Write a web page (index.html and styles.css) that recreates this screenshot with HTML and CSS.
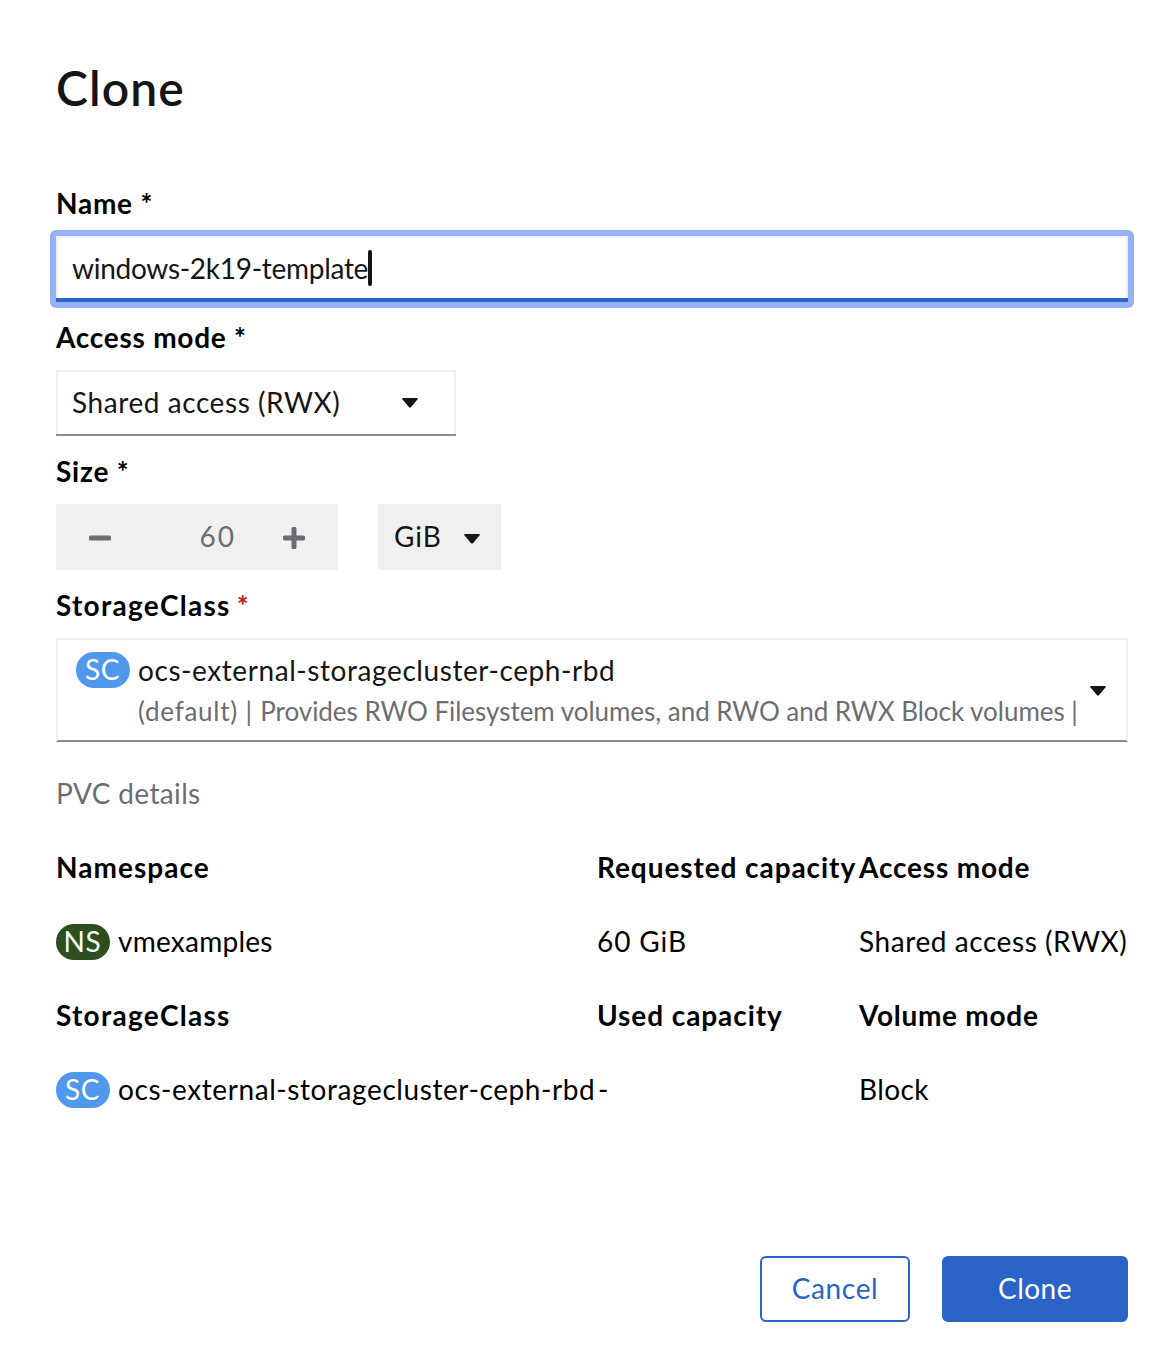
FILE: index.html
```html
<!DOCTYPE html>
<html lang="en">
<head>
<meta charset="utf-8">
<title>Clone</title>
<link rel="stylesheet" href="styles.css">
</head>
<body>
<main class="modal">
  <h1 class="title">Clone</h1>

  <form class="form">
    <div class="field">
      <label class="label label-name">Name *</label>
      <div class="focus-ring">
        <div class="control input"><span class="input-text">windows-2k19-template</span><span class="caret-bar"></span></div>
      </div>
    </div>

    <div class="field">
      <label class="label label-access">Access mode *</label>
      <div class="control select-mode">
        <span class="mode-text">Shared access (RWX)</span>
        <svg class="caret caret-mode" viewBox="0 0 16 10"><path d="M.8 0h14.400q1.300 0 .4 1.300L9.200 9Q8 10.200 6.800 9L.4 1.300Q-.5 0 .8 0Z"/></svg>
      </div>
    </div>

    <div class="field">
      <label class="label label-size">Size *</label>
      <div class="size-row">
        <div class="control stepper">
          <svg class="sign" viewBox="0 0 22 22"><rect x="0" y="8.500" width="22" height="5" rx="1.500"/></svg>
          <span class="amount">60</span>
          <svg class="sign" viewBox="0 0 22 22"><rect x="0" y="8.500" width="22" height="5" rx="1.500"/><rect x="8.500" y="0" width="5" height="22" rx="1.500"/></svg>
        </div>
        <div class="control unit">
          <span class="unit-text">GiB</span>
          <svg class="caret caret-unit" viewBox="0 0 16 10"><path d="M.8 0h14.400q1.300 0 .4 1.300L9.200 9Q8 10.200 6.800 9L.4 1.300Q-.5 0 .8 0Z"/></svg>
        </div>
      </div>
    </div>

    <div class="field">
      <label class="label label-class"><span>StorageClass</span><span class="required">*</span></label>
      <div class="storage">
        <span class="badge badge-sc">SC</span>
        <div class="storage-text">
          <div class="sc-name">ocs-external-storagecluster-ceph-rbd</div>
          <div class="storage-note"><span class="default-tag">(default) | </span>Provides RWO Filesystem volumes, and RWO and RWX Block volumes |</div>
        </div>
        <svg class="caret caret-storage" viewBox="0 0 16 10"><path d="M.8 0h14.400q1.300 0 .4 1.300L9.200 9Q8 10.200 6.800 9L.4 1.300Q-.5 0 .8 0Z"/></svg>
      </div>
    </div>
  </form>

  <section>
    <h2 class="section-title">PVC details</h2>
    <div class="details">
      <div class="term">Namespace</div>
      <div class="term term-requested">Requested capacity</div>
      <div class="term term-mode">Access mode</div>

      <div class="resource"><span class="badge badge-ns">NS</span><span class="ns-name">vmexamples</span></div>
      <div class="capacity">60 GiB</div>
      <div class="mode-text">Shared access (RWX)</div>

      <div class="term term-class">StorageClass</div>
      <div class="term term-used">Used capacity</div>
      <div class="term term-volume">Volume mode</div>

      <div class="resource"><span class="badge badge-sc">SC</span><span class="sc-name">ocs-external-storagecluster-ceph-rbd</span></div>
      <div class="dash">-</div>
      <div class="volume">Block</div>
    </div>
  </section>

  <footer class="actions">
    <button class="button cancel" type="button">Cancel</button>
    <button class="button primary" type="button">Clone</button>
  </footer>
</main>
</body>
</html>
```
FILE: styles.css
```css
* { box-sizing: border-box; }

body {
  margin: 0;
  background: #fff;
  color: #151515;
  font: 400 28px/42px Lato, "Liberation Sans", sans-serif;
}

.modal { padding: 57px 48px 48px 56px; }

.title {
  margin: 0 0 63px;
  font-size: 48px;
  line-height: 62px;
  font-weight: 600;
  letter-spacing: 1.1px;
}

.form { display: flex; flex-direction: column; gap: 14px; }
.field { display: flex; flex-direction: column; gap: 12px; }

.label, .term { color: #000; font-weight: 700; white-space: nowrap; }
.label-name { letter-spacing: .75px; }
.label-access { letter-spacing: .75px; }
.label-size { letter-spacing: .8px; }
.label-class { display: flex; gap: 6px; letter-spacing: 1.28px; }
.required { color: #b1271b; }

.control {
  display: flex;
  align-items: center;
  height: 66px;
  padding-bottom: 4px;
}

.focus-ring {
  margin: -6px;
  padding: 6px;
  border-radius: 6px;
  background: #96b1f5;
}

.input, .select-mode {
  background: #fff;
  box-shadow: inset 2px 2px #f0f0f0, inset -2px 0 #f0f0f0;
}
.input {
  padding: 2px 16px 0;
  border-bottom: 4px solid #2964c6;
}
.input-text { letter-spacing: -.28px; }
.caret-bar { width: 4px; height: 36px; border-radius: 2px; background: #151515; }

.caret { width: 16px; height: 10px; flex: none; fill: #151515; }
.caret-mode { margin-top: 1px; }
.caret-unit { margin-top: 6px; }
.caret-storage { margin-top: 2px; }

.select-mode {
  width: 400px;
  justify-content: space-between;
  padding: 2px 38px 2px 16px;
  border-bottom: 2px solid #8a8d90;
}
.mode-text { letter-spacing: .57px; white-space: nowrap; }

.size-row { display: flex; gap: 40px; }
.stepper {
  width: 282px;
  padding: 0 33px;
  background: #f0f0f0;
  color: #6a6e73;
}
.sign { width: 22px; height: 22px; margin-top: 2px; flex: none; fill: #6a6e73; }
.amount { flex: 1; padding: 0 47px 2px 0; text-align: right; letter-spacing: 2px; }
.unit { width: 123px; justify-content: space-between; padding: 0 21px 2px 16px; background: #f0f0f0; }
.unit-text { letter-spacing: 1px; }

.storage {
  display: flex;
  align-items: center;
  height: 104px;
  padding: 0 20px 0 18px;
  border: 2px solid #f0f0f0;
  border-bottom-color: #8a8d90;
}
.storage .badge { align-self: flex-start; margin: 12px 8px 0 0; }
.storage-text { flex: 1; white-space: nowrap; }
.storage-note { font-size: 26px; line-height: 40px; letter-spacing: -.03px; color: #6a6e73; }
.default-tag { letter-spacing: .76px; }
.sc-name { letter-spacing: .58px; }

.badge {
  width: 54px;
  height: 36px;
  flex: none;
  padding-right: 1px;
  border-radius: 18px;
  color: #fff;
  line-height: 35px;
  text-align: center;
  letter-spacing: .6px;
}
.badge-sc { background: #4f98ec; }
.badge-ns { background: #2b4f1f; }

.section-title {
  margin: 30px 0 32px;
  color: #6a6e73;
  font-size: 28px;
  font-weight: 400;
  letter-spacing: .36px;
}

.details {
  display: grid;
  grid-template-columns: 541px 262px 1fr;
  row-gap: 32px;
  color: #000;
  white-space: nowrap;
}
.term { letter-spacing: 1.02px; }
.term-requested { letter-spacing: .92px; }
.term-mode { letter-spacing: .82px; }
.term-class { letter-spacing: 1.28px; }
.term-used { letter-spacing: .92px; }
.term-volume { letter-spacing: .72px; }
.resource { display: flex; align-items: center; gap: 8px; }
.resource .badge { margin-top: 2px; }
.ns-name { letter-spacing: .25px; }
.capacity { letter-spacing: .9px; }
.dash { padding-left: 1px; }
.volume { letter-spacing: .4px; }

.actions { display: flex; justify-content: flex-end; gap: 32px; margin-top: 146px; }
.button {
  height: 66px;
  padding: 0 0 2px;
  border: 2px solid #2964c6;
  border-radius: 6px;
  font: inherit;
}
.cancel { width: 150px; background: #fff; color: #2964c6; letter-spacing: .65px; }
.primary { width: 186px; background: #2964c6; color: #fff; letter-spacing: .45px; }
```
